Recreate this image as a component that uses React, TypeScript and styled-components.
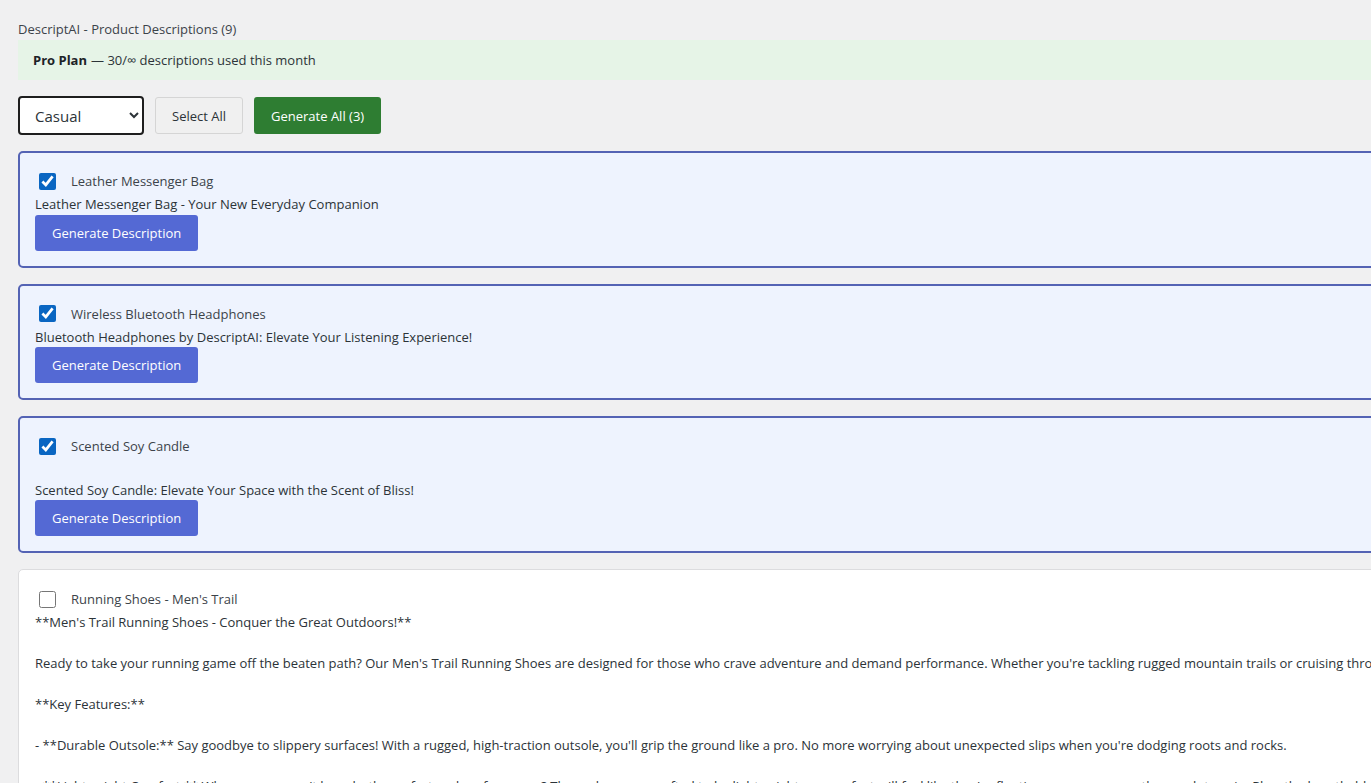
import styled, { createGlobalStyle } from "styled-components";

const GlobalStyle = createGlobalStyle`
  html, body {
    margin: 0;
    padding: 0;
    overflow: hidden;
    background: #f0f0f1;
  }
  body {
    font-family: "Open Sans", "Noto Sans", sans-serif;
    font-size: 13px;
    color: #3c434a;
  }
`;

const Page = styled.div`
  width: 2000px;
  padding: 18px 18px 0 18px;
  display: flex;
  flex-direction: column;
`;

const Heading = styled.h1`
  margin: 0;
  font-size: 13px;
  font-weight: 400;
  line-height: 22px;
  color: #3c434a;
`;

const Notice = styled.div`
  background: #e6f4e7;
  padding: 0 15px;
  height: 40px;
  display: flex;
  align-items: center;
  color: #2c3338;
  strong {
    font-weight: 700;
    color: #1d2327;
    margin-right: 4px;
  }
`;

const Toolbar = styled.div`
  display: flex;
  align-items: center;
  gap: 11px;
  margin: 16px 0 16px;
`;

const Select = styled.select`
  width: 126px;
  height: 39px;
  border: 2px solid #1e1e1e;
  border-radius: 4px;
  background: #fff;
  font-family: "Open Sans", "Noto Sans", sans-serif;
  font-size: 15px;
  color: #2c3338;
  padding: 0 10px 0 11px;
`;

interface IButtonProps {
  variant: "plain" | "green" | "blue";
}

const Button = styled.button<IButtonProps>`
  font-family: "Open Sans", "Noto Sans", sans-serif;
  font-size: 13px;
  height: ${props => props.variant === "blue" ? "36px" : "37px"};
  padding: 0 16px;
  border-radius: 3px;
  cursor: pointer;
  border: 1px solid ${props => props.variant === "plain" ? "#d5d5d5" : "transparent"};
  background: ${props => props.variant === "plain" ? "#f0f0f0" : props.variant === "green" ? "#2e7d32" : "#5469d4"};
  color: ${props => props.variant === "plain" ? "#2c3338" : "#fff"};
`;

const List = styled.div`
  display: flex;
  flex-direction: column;
  gap: 16px;
`;

interface ICardProps {
  selected: boolean;
}

const Card = styled.div<ICardProps>`
  display: flex;
  flex-direction: column;
  align-items: flex-start;
  padding: ${props => props.selected ? "15px" : "16px"};
  border: ${props => props.selected ? "2px solid #5463b4" : "1px solid #dcdcde"};
  border-radius: 5px;
  background: ${props => props.selected ? "#eef3fe" : "#fff"};
`;

const CheckRow = styled.label`
  display: flex;
  align-items: center;
  height: 26px;
  gap: 15px;
  color: #3c434a;
`;

const Checkbox = styled.input`
  width: 17px;
  height: 17px;
  margin: 0 0 0 4px;
  accent-color: #0a66c2;
`;

const Description = styled.div`
  white-space: pre-wrap;
  line-height: 20.5px;
  color: #2c3338;
`;

const products = [
  {
    id: 1,
    name: "Leather Messenger Bag",
    text: "Leather Messenger Bag - Your New Everyday Companion",
    selected: true,
  },
  {
    id: 2,
    name: "Wireless Bluetooth Headphones",
    text: "Bluetooth Headphones by DescriptAI: Elevate Your Listening Experience!",
    selected: true,
  },
  {
    id: 3,
    name: "Scented Soy Candle",
    text: "\nScented Soy Candle: Elevate Your Space with the Scent of Bliss!",
    selected: true,
  },
  {
    id: 4,
    name: "Running Shoes - Men's Trail",
    text:
      "**Men's Trail Running Shoes - Conquer the Great Outdoors!**\n\nReady to take your running game off the beaten path? Our Men's Trail Running Shoes are designed for those who crave adventure and demand performance. Whether you're tackling rugged mountain trails or cruising through muddy forest paths, these shoes have you covered.\n\n**Key Features:**\n\n- **Durable Outsole:** Say goodbye to slippery surfaces! With a rugged, high-traction outsole, you'll grip the ground like a pro. No more worrying about unexpected slips when you're dodging roots and rocks.\n\n- **Lightweight Comfort:** Who says you can't have both comfort and performance? These shoes are crafted to be lightweight so your feet will feel like they're floating as you conquer the rough terrain. Plus, the breathable mesh keeps you cool.",
    selected: false,
  },
];

function App() {
  return (
    <>
      <GlobalStyle />
      <Page>
        <Heading>DescriptAI - Product Descriptions (9)</Heading>
        <Notice>
          <strong>Pro Plan</strong> — 30/∞ descriptions used this month
        </Notice>
        <Toolbar>
          <Select defaultValue="casual">
            <option value="casual">Casual</option>
            <option value="professional">Professional</option>
          </Select>
          <Button variant="plain">Select All</Button>
          <Button variant="green">Generate All (3)</Button>
        </Toolbar>
        <List>
          {products.map(p => (
            <Card key={p.id} selected={p.selected}>
              <CheckRow>
                <Checkbox type="checkbox" defaultChecked={p.selected} />
                {p.name}
              </CheckRow>
              <Description>{p.text}</Description>
              {p.selected && <Button variant="blue">Generate Description</Button>}
            </Card>
          ))}
        </List>
      </Page>
    </>
  );
}

export default App;
